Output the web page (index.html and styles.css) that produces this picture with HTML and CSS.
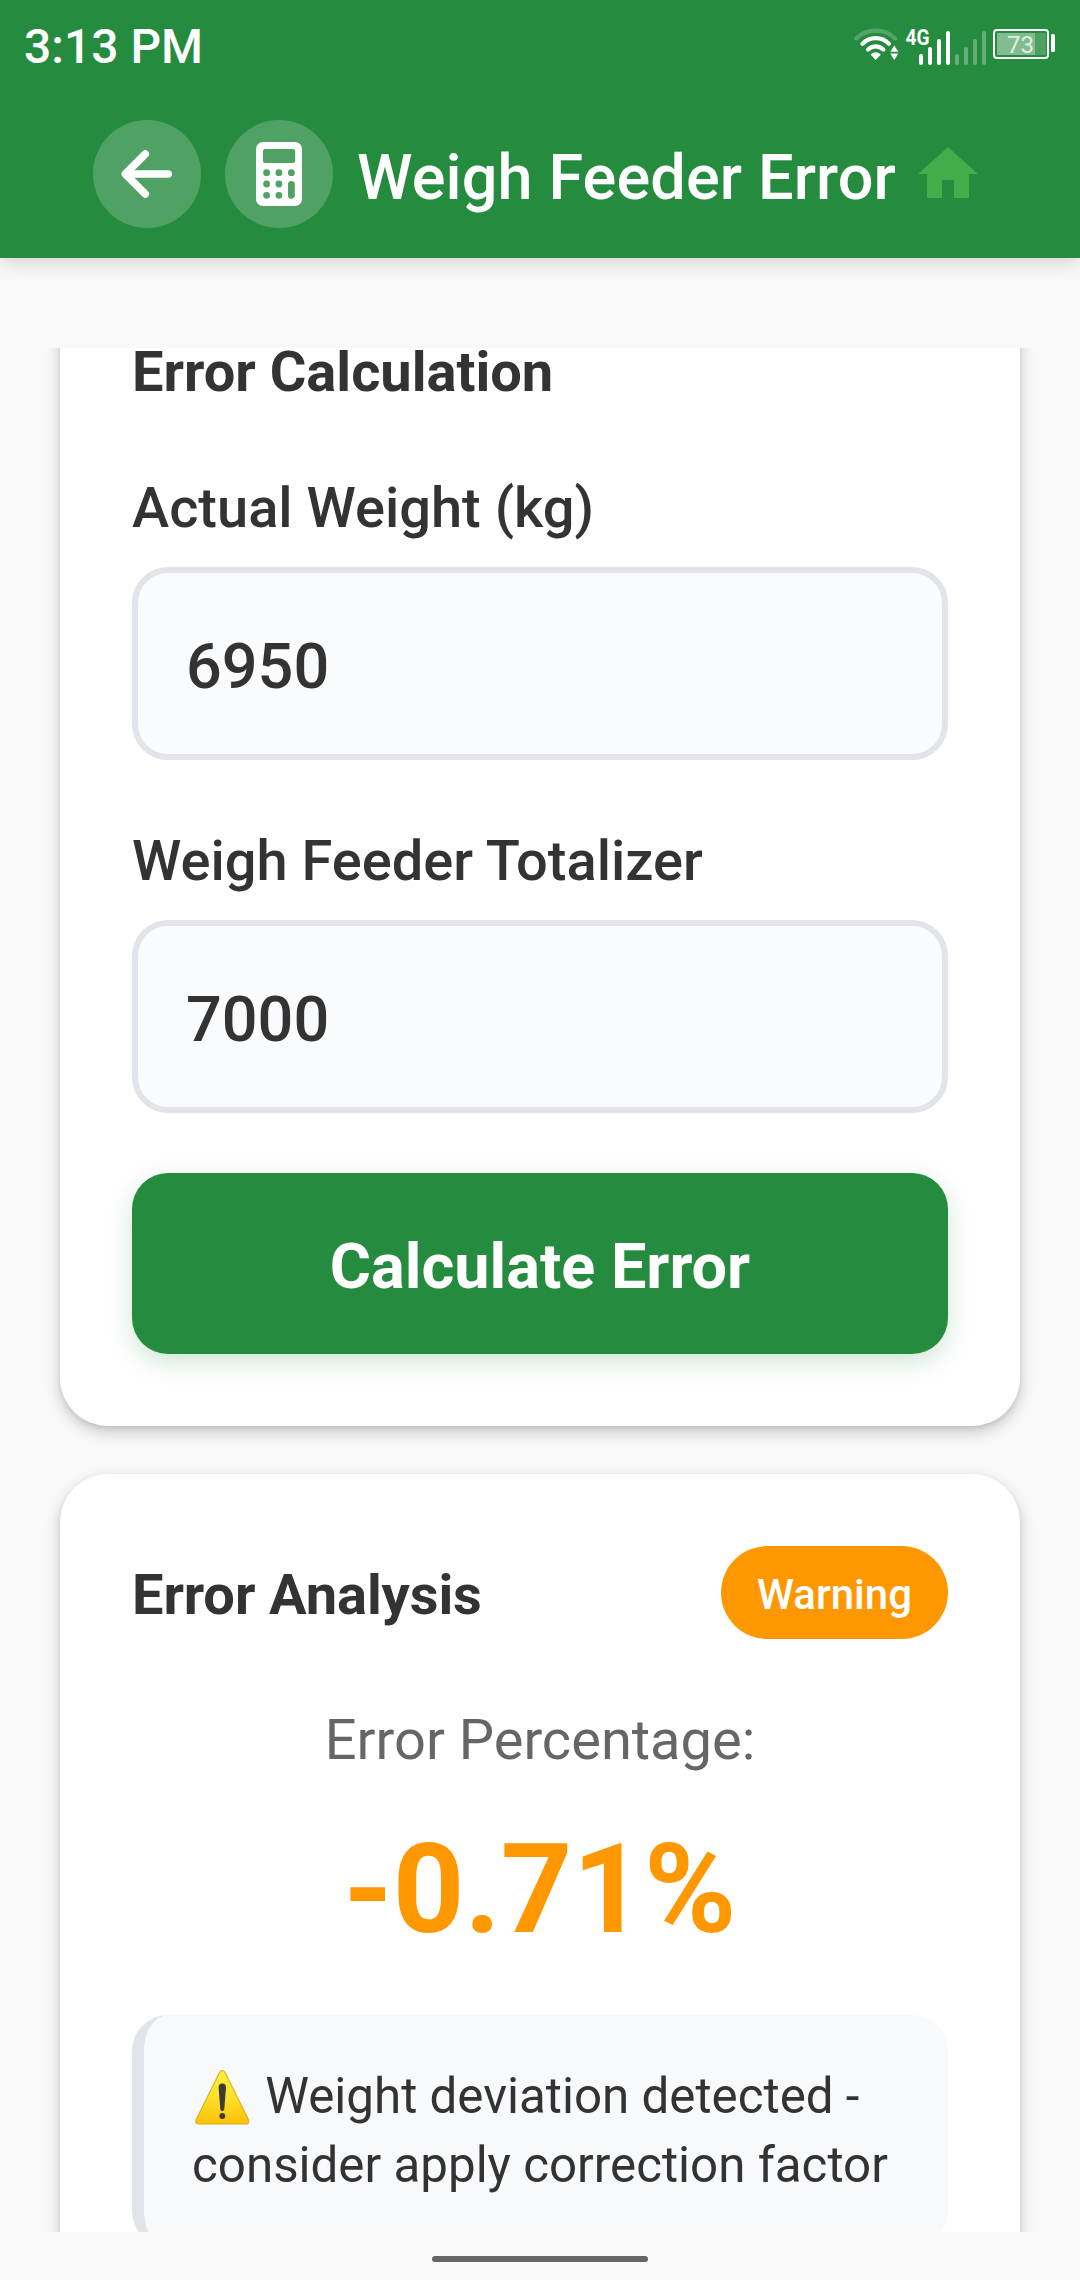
FILE: index.html
```html
<!DOCTYPE html>
<html lang="en">
<head>
<meta charset="utf-8">
<title>Weigh Feeder Error</title>
<link rel="stylesheet" href="styles.css">
</head>
<body>
<div class="screen">
  <header class="header">
    <div class="status">
      <span class="clock">3:13 PM</span>
      <svg class="status-icons" width="208" height="93" viewBox="850 0 208 93" fill="none">
        <g stroke="#fff" stroke-width="4.2" stroke-linecap="round">
          <path d="M856.3 38.5a27.8 27.8 0 0 1 38.8 0" stroke-opacity=".22"/>
          <path d="M862.5 43.7a18.5 18.5 0 0 1 26.4 0"/>
          <path d="M868 49.6a10.8 10.8 0 0 1 15.4 0"/>
        </g>
        <path d="M870.5 54.6q5.200-4.800 10.400 0l-5.200 5.400z" fill="#fff"/>
        <path d="M894.300 45.500l4 6.300h-8zM894.300 60l4-6.500h-8z" fill="#fff"/>
        <text class="net" x="905.500" y="45" textLength="24" lengthAdjust="spacingAndGlyphs">4G</text>
        <g stroke="#fff" stroke-width="4" stroke-linecap="round">
          <path d="M921 56v7M930 49v14M939 41v22M948 33v30"/>
          <path d="M957 56v7M966 49v14M975 41v22M984 33v30" stroke-opacity=".3"/>
        </g>
        <rect x="994" y="30" width="54" height="28" rx="3" stroke="#fff" stroke-width="2"/>
        <path d="M997 33h49v22h-49z" fill="#fff" fill-opacity=".18"/>
        <path d="M997 33h38v22h-38z" fill="#fff" fill-opacity=".3"/>
        <rect x="1051" y="34" width="4" height="18" rx="1.500" fill="#fff"/>
        <text class="charge" x="1007" y="53">73</text>
      </svg>
    </div>
    <div class="toolbar">
      <div class="round">
        <svg width="108" height="108" viewBox="93 120 108 108" fill="none" stroke="#fff" stroke-width="7.500" stroke-linecap="round" stroke-linejoin="round"><path d="M145.300 154l-20 20 20 20M126 174h42.200"/></svg>
      </div>
      <div class="round">
        <svg width="108" height="108" viewBox="225 120 108 108"><path fill="#fff" fill-rule="evenodd" d="M263 142h32a7 7 0 0 1 7 7v50a7 7 0 0 1-7 7h-32a7 7 0 0 1-7-7v-50a7 7 0 0 1 7-7zM265 149a2 2 0 0 0-2 2v10a2 2 0 0 0 2 2h28.200a2 2 0 0 0 2-2v-10a2 2 0 0 0-2-2zM263.200 172.700a3.400 3.400 0 1 0 6.800 0a3.400 3.400 0 1 0-6.800 0zM275.500 172.700a3.400 3.400 0 1 0 6.800 0a3.400 3.400 0 1 0-6.800 0zM288 172.700a3.400 3.400 0 1 0 6.800 0a3.400 3.400 0 1 0-6.800 0zM263.200 184a3.400 3.400 0 1 0 6.800 0a3.400 3.400 0 1 0-6.800 0zM275.500 184a3.400 3.400 0 1 0 6.800 0a3.400 3.400 0 1 0-6.800 0zM263.200 195.300a3.400 3.400 0 1 0 6.800 0a3.400 3.400 0 1 0-6.800 0zM275.500 195.300a3.400 3.400 0 1 0 6.800 0a3.400 3.400 0 1 0-6.800 0zM288 184.400a3.400 3.400 0 0 1 6.800 0v10.900a3.400 3.400 0 0 1-6.800 0z"/></svg>
      </div>
      <h1 class="title">Weigh Feeder Error</h1>
      <svg class="home" width="60" height="51" viewBox="0 0 60 51"><path fill="#43ad49" d="M30 0l30 27h-9v24H36V33H24v18H9V27H0z"/></svg>
    </div>
  </header>

  <main class="scroller">
    <section class="card">
      <h2 class="heading">Error Calculation</h2>
      <div class="field">
        <label class="label">Actual Weight (kg)</label>
        <div class="input">6950</div>
      </div>
      <div class="field">
        <label class="label">Weigh Feeder Totalizer</label>
        <div class="input">7000</div>
      </div>
      <div class="button">Calculate Error</div>
    </section>

    <section class="card">
      <div class="card-head">
        <h2 class="heading analysis">Error Analysis</h2>
        <span class="badge">Warning</span>
      </div>
      <p class="caption">Error Percentage:</p>
      <p class="value">-0.71%</p>
      <p class="message"><svg class="warn" width="60" height="56" viewBox="0 0 60 56">
        <defs><linearGradient id="y" x1="0" y1="0" x2="0" y2="1"><stop offset="0" stop-color="#ffef3f"/><stop offset=".5" stop-color="#fddf2c"/><stop offset="1" stop-color="#fbc106"/></linearGradient></defs>
        <path d="M27.500 3.500Q30.200-.5 33 3.500L56.600 51Q57.500 55 54 55H6.500Q3 55 4 51z" fill="url(#y)" stroke="#dcb41e" stroke-width="1.200"/>
        <path d="M26.600 18.500q0-4 3.700-4t3.700 4L32.300 40q-.2 2-2 2t-2-2z" fill="#3a3a36"/><circle cx="30.300" cy="47" r="2.900" fill="#3a3a36"/></svg> Weight deviation detected - consider apply correction factor</p>
    </section>
  </main>

  <footer class="nav"><div class="pill"></div></footer>
</div>
</body>
</html>
```
FILE: styles.css
```css
* { box-sizing: border-box; margin: 0; }

body { background: #f9f9f9; font-family: Roboto, sans-serif; color: #333; }

.screen {
  width: 1080px;
  height: 2280px;
  display: flex;
  flex-direction: column;
  overflow: hidden;
}

.header {
  height: 258px;
  flex: none;
  background: #258b3e;
  color: #fff;
  box-shadow: 0 5px 18px rgba(0, 0, 0, .15);
}

.status {
  height: 93px;
  padding: 0 22px 0 24px;
  display: flex;
  justify-content: space-between;
}

.clock { font-size: 48px; font-weight: 500; line-height: 93px; }
.status-icons { display: block; }
.net { font: 700 22px Roboto, sans-serif; fill: #fff; }
.charge { font: 400 24px Roboto, sans-serif; fill: #fff; fill-opacity: .75; }

.toolbar {
  display: flex;
  align-items: center;
  padding: 27px 93px 0;
  gap: 24px;
}

.round {
  width: 108px;
  height: 108px;
  flex: none;
  border-radius: 50%;
  background: rgba(255, 255, 255, .2);
}

.round svg { display: block; }

.title {
  padding-top: 7px;
  font-size: 63px;
  font-weight: 500;
  letter-spacing: .12px;
  white-space: nowrap;
}

.home { flex: none; margin-top: -3px; margin-left: -2px; }

.scroller {
  height: 1884px;
  flex: none;
  margin-top: 90px;
  padding: 0 60px;
  overflow: hidden;
}

.card {
  padding: 72px;
  background: #fff;
  border-radius: 48px;
  box-shadow: 0 6px 16px rgba(0, 0, 0, .2), 0 2px 5px rgba(0, 0, 0, .09);
}

.card:first-child { margin-top: -72px; }
.card + .card { margin-top: 48px; }

.heading { font-size: 56px; font-weight: 700; line-height: 48px; }

.field { margin-top: 68px; }
.heading + .field { margin-top: 79px; }

.label {
  display: block;
  margin-bottom: 26px;
  font-size: 56px;
  font-weight: 500;
  line-height: 66px;
}

.input {
  height: 193px;
  padding: 5px 48px 0;
  display: flex;
  align-items: center;
  border: 6px solid #e1e4e9;
  border-radius: 36px;
  background: #fafbfd;
  font-size: 63px;
  font-weight: 500;
}

.button {
  height: 181px;
  margin-top: 60px;
  padding-top: 5px;
  display: flex;
  align-items: center;
  justify-content: center;
  border-radius: 36px;
  background: #258b3e;
  box-shadow: 0 8px 24px rgba(37, 139, 62, .22);
  color: #fff;
  font-size: 63px;
  font-weight: 700;
}

.card-head { display: flex; justify-content: space-between; align-items: center; }
.analysis { padding-top: 5px; letter-spacing: -.1px; }

.badge {
  height: 93px;
  padding: 4px 36px 0;
  display: flex;
  align-items: center;
  border-radius: 47px;
  background: #ff9800;
  color: #fff;
  font-size: 42px;
  font-weight: 500;
}

.caption {
  margin-top: 68px;
  color: #666;
  font-size: 56px;
  line-height: 66px;
  text-align: center;
}

.value {
  margin-top: 42px;
  color: #ff9800;
  font-size: 125px;
  font-weight: 700;
  line-height: 150px;
  text-align: center;
}

.message {
  margin-top: 50px;
  padding: 47px 40px 47px 48px;
  border-left: 12px solid #e1e4e9;
  border-radius: 36px;
  background: #f8f9fb;
  font-size: 49.3px;
  line-height: 69px;
}

.warn { display: inline-block; vertical-align: -11px; margin: -10px 1px -1px 0; }

.nav {
  height: 48px;
  display: flex;
  align-items: center;
  justify-content: center;
  padding-top: 6px;
}

.pill { width: 216px; height: 6px; border-radius: 3px; background: #666; }
```
